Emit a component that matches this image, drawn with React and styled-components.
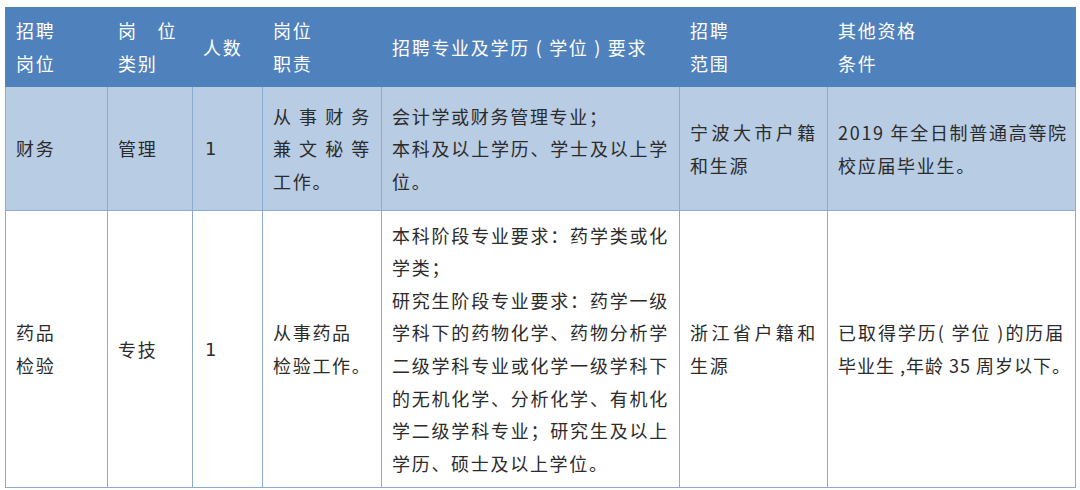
import React from "react";
import styled, { createGlobalStyle } from "styled-components";

const GlobalStyle = createGlobalStyle`
  html, body {
    margin: 0;
    padding: 0;
    background: #ffffff;
  }
`;

const Page = styled.div`
  padding: 7px 0 0 5px;
  font-family: "Noto Sans CJK SC", "Noto Sans", sans-serif;
`;

const Table = styled.table`
  border-collapse: collapse;
  table-layout: fixed;
  width: 1070px;
  font-size: 18px;
  letter-spacing: 1.7px;
  line-height: 32.6px;
`;

const HeadRow = styled.tr`
  height: 79px;
  background: #4f81bd;
`;

const Row = styled.tr`
  height: ${(p) => p.$height}px;
  background: ${(p) => p.$bg};
`;

const HeadCell = styled.th`
  padding: 0 10px;
  text-align: left;
  vertical-align: middle;
  font-weight: normal;
  color: #ffffff;
  border: 1px solid #4f81bd;
`;

const Cell = styled.td`
  padding: 0 10px;
  text-align: left;
  vertical-align: middle;
  color: #2b2b2b;
  border: 1px solid #8ea9d3;
`;

const Line = styled.div`
  white-space: nowrap;
  text-align: ${(p) => (p.$justify ? "justify" : "left")};
  text-align-last: ${(p) => (p.$justify ? "justify" : "left")};
  letter-spacing: ${(p) => (p.$tight ? "1px" : "inherit")};
`;

const Count = styled.span`
  font-family: "DejaVu Sans", "Noto Sans", sans-serif;
  font-size: 18px;
  letter-spacing: 0;
  padding-left: 2px;
`;

const widths = [102, 85, 70, 119, 298, 148, 248];

const head = [
  ["招聘", "岗位"],
  ["岗　位", "类别"],
  ["人数"],
  ["岗位", "职责"],
  ["招聘专业及学历 ( 学位 ) 要求"],
  ["招聘", "范围"],
  ["其他资格", "条件"],
];

// "*" at the front: spread over the full cell width; "~" at the front: tighter spacing
const rows = [
  {
    bg: "#b8cce4",
    height: 124,
    cells: [
      ["财务"],
      ["管理"],
      1,
      ["*从事财务", "*兼文秘等", "工作。"],
      ["会计学或财务管理专业；", "*本科及以上学历、学士及以上学", "位。"],
      ["*宁波大市户籍", "和生源"],
      ["*2019 年全日制普通高等院", "校应届毕业生。"],
    ],
  },
  {
    bg: "#ffffff",
    height: 277,
    cells: [
      ["药品", "检验"],
      ["专技"],
      1,
      ["从事药品", "检验工作。"],
      [
        "*本科阶段专业要求：药学类或化",
        "学类；",
        "*研究生阶段专业要求：药学一级",
        "*学科下的药物化学、药物分析学",
        "*二级学科专业或化学一级学科下",
        "*的无机化学、分析化学、有机化",
        "*学二级学科专业；研究生及以上",
        "学历、硕士及以上学位。",
      ],
      ["*浙江省户籍和", "生源"],
      ["*已取得学历( 学位 )的历届", "~毕业生 ,年龄 35 周岁以下。"],
    ],
  },
];

const Lines = ({ lines }) =>
  lines.map((l, i) => {
    if (l.startsWith("*"))
      return (
        <Line key={i} $justify>
          {l.slice(1)}
        </Line>
      );
    if (l.startsWith("~"))
      return (
        <Line key={i} $tight>
          {l.slice(1)}
        </Line>
      );
    return <Line key={i}>{l}</Line>;
  });

export default function App() {
  return (
    <Page>
      <GlobalStyle />
      <Table>
        <colgroup>
          {widths.map((w, i) => (
            <col key={i} style={{ width: w }} />
          ))}
        </colgroup>
        <thead>
          <HeadRow>
            {head.map((h, i) => (
              <HeadCell key={i}>
                <Lines lines={h} />
              </HeadCell>
            ))}
          </HeadRow>
        </thead>
        <tbody>
          {rows.map((r, i) => (
            <Row key={i} $bg={r.bg} $height={r.height}>
              {r.cells.map((c, j) => (
                <Cell key={j}>
                  {typeof c === "number" ? <Count>{c}</Count> : <Lines lines={c} />}
                </Cell>
              ))}
            </Row>
          ))}
        </tbody>
      </Table>
    </Page>
  );
}
